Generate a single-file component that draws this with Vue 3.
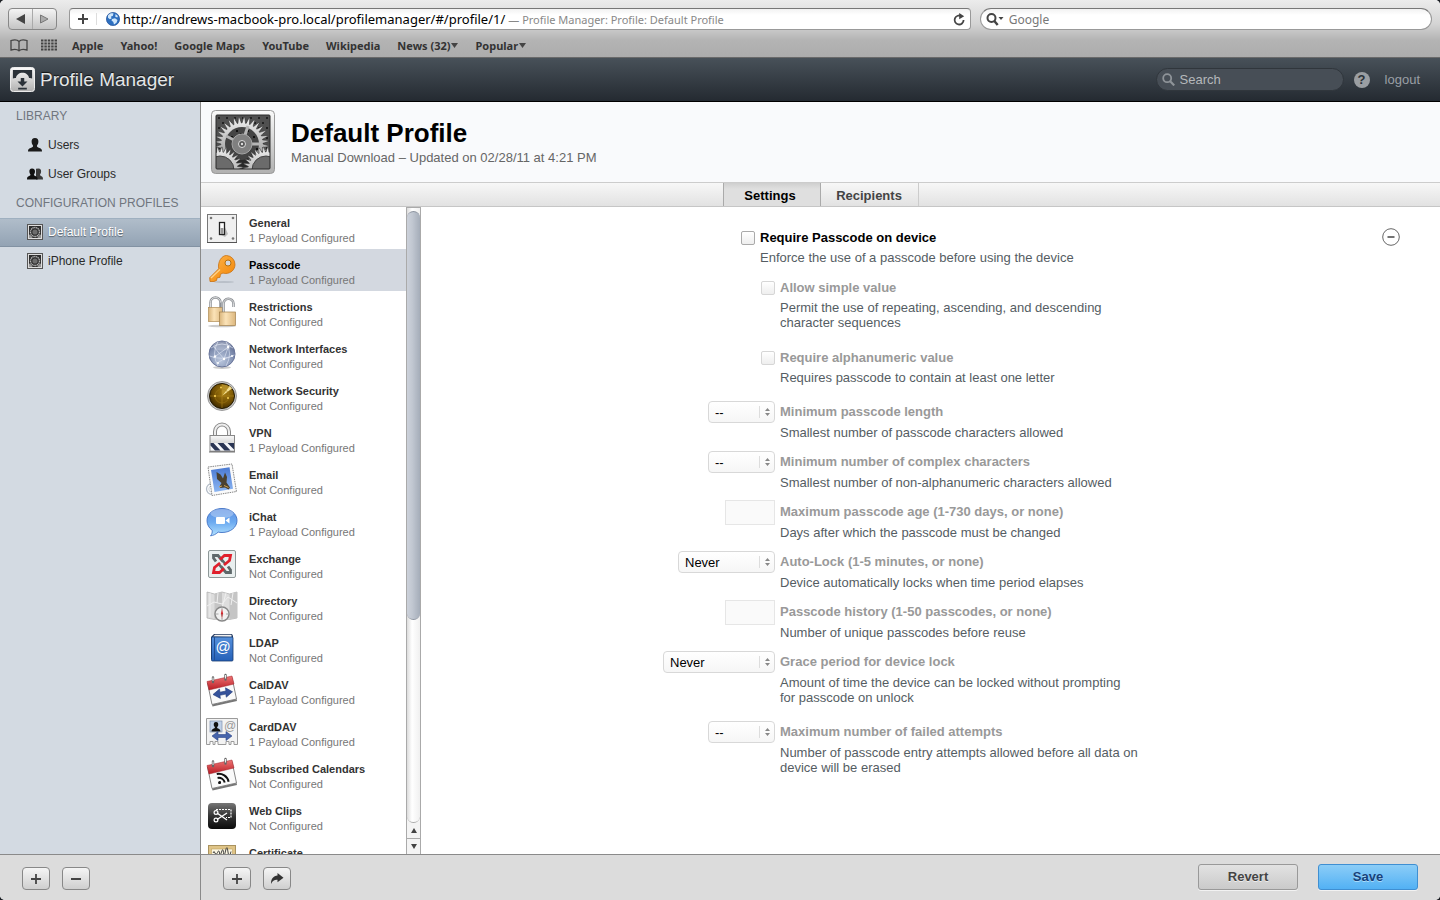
<script setup>
import { ref } from 'vue'

const bookmarks = ['Apple', 'Yahoo!', 'Google Maps', 'YouTube', 'Wikipedia']
const folders = ['News (32)', 'Popular']

const payloads = [
  { icon: 'general', name: 'General', on: true },
  { icon: 'passcode', name: 'Passcode', on: true },
  { icon: 'restrictions', name: 'Restrictions', on: false },
  { icon: 'network', name: 'Network Interfaces', on: false },
  { icon: 'security', name: 'Network Security', on: false },
  { icon: 'vpn', name: 'VPN', on: true },
  { icon: 'email', name: 'Email', on: false },
  { icon: 'ichat', name: 'iChat', on: true },
  { icon: 'exchange', name: 'Exchange', on: false },
  { icon: 'directory', name: 'Directory', on: false },
  { icon: 'ldap', name: 'LDAP', on: false, at: { x: 18, y: 21, size: 15, fill: '#fff' } },
  { icon: 'caldav', name: 'CalDAV', on: true },
  { icon: 'carddav', name: 'CardDAV', on: true, at: { x: 25, y: 15, size: 12, fill: '#999' } },
  { icon: 'calendars', name: 'Subscribed Calendars', on: false },
  { icon: 'webclips', name: 'Web Clips', on: false },
  { icon: 'certificate', name: 'Certificate', on: false }
]

const fields = [
  { id: 'simple', type: 'check', label: 'Allow simple value', help: 'Permit the use of repeating, ascending, and descending character sequences', tall: true },
  { id: 'alpha', type: 'check', label: 'Require alphanumeric value', help: 'Requires passcode to contain at least one letter', last: true },
  { id: 'length', type: 'select', size: 'short', value: '--', label: 'Minimum passcode length', help: 'Smallest number of passcode characters allowed' },
  { id: 'complex', type: 'select', size: 'short', value: '--', label: 'Minimum number of complex characters', help: 'Smallest number of non-alphanumeric characters allowed' },
  { id: 'age', type: 'text', label: 'Maximum passcode age (1-730 days, or none)', help: 'Days after which the passcode must be changed' },
  { id: 'lock', type: 'select', size: 'medium', value: 'Never', label: 'Auto-Lock (1-5 minutes, or none)', help: 'Device automatically locks when time period elapses' },
  { id: 'history', type: 'text', label: 'Passcode history (1-50 passcodes, or none)', help: 'Number of unique passcodes before reuse' },
  { id: 'grace', type: 'select', size: 'long', value: 'Never', label: 'Grace period for device lock', help: 'Amount of time the device can be locked without prompting for passcode on unlock', tall: true },
  { id: 'failed', type: 'select', size: 'short', value: '--', label: 'Maximum number of failed attempts', help: 'Number of passcode entry attempts allowed before all data on device will be erased', tall: true }
]

const selected = ref('passcode')
const tab = ref('settings')
const required = ref(false)

// outline of a cog: pointed teeth between the inner and outer radius
function gear(cx, cy, inner, outer, teeth) {
  const pts = []
  for (let i = 0; i < teeth; i++) {
    const a = (i / teeth) * Math.PI * 2
    const s = (Math.PI * 2) / teeth
    const steps = [[inner, 0], [outer, 0.35], [outer, 0.5], [inner, 0.85]]
    for (const [r, k] of steps) {
      pts.push((cx + r * Math.cos(a + s * k)).toFixed(2) + ' ' + (cy + r * Math.sin(a + s * k)).toFixed(2))
    }
  }
  return 'M' + pts.join('L') + 'Z'
}
</script>

<template>
  <div class="window">
    <!-- BROWSER BAR -->
    <div class="browser">
      <div class="browser-row">
        <div class="nav-buttons">
          <button aria-label="Back"><svg width="9" height="10" viewBox="0 0 9 10"><path d="M9 0v10L0 5z" fill="#444" /></svg></button>
          <button aria-label="Forward"><svg width="9" height="10" viewBox="0 0 9 10"><path d="M.5 1v8L8 5z" fill="#aaa" stroke="#777" /></svg></button>
        </div>
        <div class="address">
          <button class="add-bookmark" aria-label="Add bookmark"><svg width="12" height="12" viewBox="0 0 12 12"><path d="M6 1v10M1 6h10" stroke="#444" stroke-width="2" /></svg></button>
          <svg class="globe" width="14" height="14" viewBox="0 0 14 14">
            <circle cx="7" cy="7" r="6.6" fill="#2d6fc0" stroke="#25539a" stroke-width=".7" />
            <path d="M2 3.5C4 .8 6 1 7.500 1.500L6.800 4 5 4.600 5.500 6.500 3.800 7.200 2 5.800z" fill="#cfe6fa" />
            <path d="M6 7l3-.8 2.500 1.800-1 2.800-2.500 1.700-.7-2.500L5.500 8.600zM9.500 2l2.400 2-.6 1.500-2-.8z" fill="#cfe6fa" />
          </svg>
          <label class="url" for="url">http://andrews-macbook-pro.local/profilemanager/#/profile/1/</label>
          <input id="url" class="page-title" type="text" value="— Profile Manager: Profile: Default Profile">
          <button class="reload" aria-label="Reload"><svg width="12" height="13" viewBox="0 0 12 13"><path d="M8.500 3.200A4.500 4.500 0 1 0 10.600 7" fill="none" stroke="#444" stroke-width="1.800" /><path d="M6.200 0l5 3.300-5 3z" fill="#444" /></svg></button>
        </div>
        <div class="google">
          <svg width="18" height="13" viewBox="0 0 18 13"><circle cx="5.500" cy="5" r="4" fill="none" stroke="#444" stroke-width="2" /><path d="M8.300 8l3.400 4" stroke="#444" stroke-width="2.400" /><path d="M12.500 4h5l-2.500 3z" fill="#444" /></svg>
          <input type="search" aria-label="Google" placeholder="Google">
        </div>
      </div>
      <nav class="bookmarks">
        <a href="#" aria-label="Show all bookmarks"><svg width="18" height="13" viewBox="0 0 18 13"><path d="M9 2.500C7.500.8 4 .6 1 1.500v9.500c3-.8 6.500-.6 8 .9 1.500-1.500 5-1.700 8-.9V1.500C14 .6 10.500.8 9 2.500zm0 0v9" fill="none" stroke="#444" stroke-width="1.300" /></svg></a>
        <a href="#" class="grid-link" aria-label="Top sites"><svg width="16" height="12" viewBox="0 0 16 12"><path d="M0 1.500h16M0 4.500h16M0 7.500h16M0 10.500h16" stroke="#444" stroke-width="2" stroke-dasharray="2.400 1" /></svg></a>
        <a v-for="b in bookmarks" :key="b" href="#">{{ b }}</a>
        <a v-for="f in folders" :key="f" href="#" class="folder">{{ f }}<svg width="7" height="5" viewBox="0 0 7 5"><path d="M0 0h7L3.500 5z" fill="#444" /></svg></a>
      </nav>
    </div>

    <!-- APP HEADER -->
    <header class="header">
      <svg width="25" height="25" viewBox="0 0 26 26">
        <rect x=".5" y=".5" width="25" height="25" rx="3" fill="url(#metal)" stroke="#f2f2f2" />
        <path d="M3 3h20v9c-1.500-.8-2.300-.8-3.200-.5C19.300 8 16.500 6 13 6s-6.300 2-6.800 5.500C5 11.200 4 11.500 3 12z" fill="#2b3239" />
        <path d="M11.200 11.500h3.600V15h3.400L13 20.200 7.800 15h3.400z" fill="#2b3239" />
        <path d="M8.500 22.500h9" stroke="#2b3239" stroke-width="1.800" />
      </svg>
      <h1>Profile Manager</h1>
      <div class="header-search">
        <svg width="13" height="13" viewBox="0 0 13 13"><circle cx="5.200" cy="5.200" r="4" fill="none" stroke="#8f9499" stroke-width="1.800" /><path d="M8.200 8.200l4 4.200" stroke="#8f9499" stroke-width="2.200" /></svg>
        <input type="search" aria-label="Search" placeholder="Search">
      </div>
      <button class="help" aria-label="Help">?</button>
      <a href="#" class="logout">logout</a>
    </header>

    <div class="body">
      <!-- SIDEBAR -->
      <aside class="sidebar">
        <h3>LIBRARY</h3>
        <a href="#">
          <svg width="16" height="14" viewBox="0 0 16 14"><path d="M8 0c2.500 0 3.500 1.700 3.400 3.800C11.300 6 10.400 7 9.900 7.700c0 1.300.6 1.500 2.600 2.200 1.800.7 2.500 1.200 2.500 3.600H1c0-2.400.7-2.900 2.500-3.600 2-.7 2.600-.9 2.600-2.200C5.600 7 4.700 6 4.600 3.800 4.500 1.700 5.500 0 8 0z" fill="#1b1b1b" /></svg>
          Users
        </a>
        <a href="#">
          <svg width="16" height="12" viewBox="0 0 16 12"><path d="M11.500.5c2 0 2.800 1.400 2.600 3.200-.1 1.500-.8 2.300-1.100 2.900 0 1 .3 1.200 1.500 1.700 1.100.5 1.500 1.400 1.500 3.200h-7V.8z" fill="#3a3a3a" /><path d="M5 .5c2.200 0 3.200 1.400 3 3.200-.1 1.500-.8 2.300-1.100 2.900 0 1 .4 1.200 1.900 1.700 1.300.5 1.800 1.400 1.800 3.200H0c0-1.800.4-2.700 1.700-3.200 1.400-.5 1.800-.7 1.800-1.700-.3-.6-1-1.400-1.100-2.900C2.200 1.900 3 .5 5 .5z" fill="#111" /></svg>
          User Groups
        </a>
        <h3>CONFIGURATION PROFILES</h3>
        <a href="#" class="current"><svg width="16" height="16" viewBox="0 0 16 16"><use href="#profile-small" /></svg>Default Profile</a>
        <a href="#"><svg width="16" height="16" viewBox="0 0 16 16"><use href="#profile-small" /></svg>iPhone Profile</a>
      </aside>

      <main class="main">
        <section class="profile">
          <svg width="64" height="64" viewBox="0 0 64 64"><use href="#profile" /></svg>
          <div>
            <h2>Default Profile</h2>
            <p>Manual Download – Updated on 02/28/11 at 4:21 PM</p>
          </div>
        </section>

        <div class="tabs">
          <button :class="{ active: tab === 'settings' }" @click="tab = 'settings'">Settings</button>
          <button :class="{ active: tab === 'recipients' }" @click="tab = 'recipients'">Recipients</button>
        </div>

        <div class="columns">
          <!-- PAYLOADS -->
          <div class="payloads">
            <button v-for="p in payloads" :key="p.icon" :class="{ active: selected === p.icon }" @click="selected = p.icon">
              <svg width="34" height="34" viewBox="0 0 34 34">
                <use :href="'#' + p.icon" />
                <text v-if="p.at" :x="p.at.x" :y="p.at.y" :font-size="p.at.size" :fill="p.at.fill" text-anchor="middle">@</text>
              </svg>
              <span>
                <strong>{{ p.name }}</strong>
                <small>{{ p.on ? '1 Payload Configured' : 'Not Configured' }}</small>
              </span>
            </button>
          </div>
          <div class="scrollbar">
            <div class="track"><div class="thumb"></div></div>
            <button aria-label="Scroll up"><svg width="6" height="5" viewBox="0 0 6 5"><path d="M0 5h6L3 0z" fill="#444" /></svg></button>
            <button aria-label="Scroll down"><svg width="6" height="5" viewBox="0 0 6 5"><path d="M0 0h6L3 5z" fill="#444" /></svg></button>
          </div>

          <!-- SETTINGS -->
          <div class="settings">
            <form class="form" @submit.prevent>
              <div class="row row-check outer">
                <div class="control"><input id="required" v-model="required" type="checkbox"></div>
                <div class="info">
                  <label for="required">Require Passcode on device</label>
                  <p>Enforce the use of a passcode before using the device</p>
                </div>
              </div>
              <div v-for="f in fields" :key="f.id" class="row" :class="['row-' + f.type, { tall: f.tall, last: f.last, disabled: !required }]">
                <div class="control">
                  <input v-if="f.type === 'check'" :id="f.id" type="checkbox" :disabled="!required">
                  <input v-else-if="f.type === 'text'" :id="f.id" type="text" :disabled="!required">
                  <div v-else class="picker" :class="f.size">
                    <select :id="f.id" :disabled="!required"><option>{{ f.value }}</option></select>
                    <svg width="12" height="12" viewBox="0 0 12 12"><path d="M.5 0v12" stroke="#ddd" /><path d="M6 5h5L8.500 2zM6 7h5l-2.500 3z" fill="#888" /></svg>
                  </div>
                </div>
                <div class="info">
                  <label :for="f.id">{{ f.label }}</label>
                  <p>{{ f.help }}</p>
                </div>
              </div>
            </form>
            <button class="remove" aria-label="Remove payload"><svg width="18" height="18" viewBox="0 0 18 18"><circle cx="9" cy="9" r="8.300" fill="#fff" stroke="#666" /><path d="M5.500 9h7" stroke="#444" stroke-width="1.600" /></svg></button>
          </div>
        </div>
      </main>
    </div>

    <!-- BOTTOM BAR -->
    <footer class="footer">
      <div class="footer-side">
        <button class="tool" aria-label="Add profile"><svg width="12" height="12" viewBox="0 0 12 12"><path d="M6 1v10M1 6h10" stroke="#444" stroke-width="1.800" /></svg></button>
        <button class="tool" aria-label="Remove profile"><svg width="12" height="12" viewBox="0 0 12 12"><path d="M1 6h10" stroke="#444" stroke-width="1.800" /></svg></button>
      </div>
      <div class="footer-main">
        <button class="tool" aria-label="Add payload"><svg width="12" height="12" viewBox="0 0 12 12"><path d="M6 1v10M1 6h10" stroke="#444" stroke-width="1.800" /></svg></button>
        <button class="tool" aria-label="Actions"><svg width="14" height="12" viewBox="0 0 14 12"><path d="M7.500 0L13.500 4.800 7.500 9.300V6.800C4.500 6.600 2.500 7.600 1 11 .8 6 3.500 2.800 7.500 2.600z" fill="#333" /></svg></button>
        <button class="action push">Revert</button>
        <button class="action save">Save</button>
      </div>
    </footer>

    <!-- ICONS -->
    <svg class="sprite" width="0" height="0" aria-hidden="true">
      <defs>
        <linearGradient id="metal" x1="0" y1="0" x2="0" y2="1"><stop offset="0" stop-color="#fafafa" /><stop offset="1" stop-color="#b0b0b0" /></linearGradient>
        <linearGradient id="cog" x1="0" y1="0" x2="0" y2="1"><stop offset="0" stop-color="#f2f2f2" /><stop offset="1" stop-color="#7d7d7d" /></linearGradient>
        <linearGradient id="orange" x1="0" y1="0" x2="1" y2="1"><stop offset="0" stop-color="#ffb950" /><stop offset="1" stop-color="#f08000" /></linearGradient>
        <linearGradient id="brass" x1="0" y1="0" x2="1" y2="0"><stop offset="0" stop-color="#d9b57c" /><stop offset=".4" stop-color="#fbe3b8" /><stop offset="1" stop-color="#dcb77e" /></linearGradient>
        <radialGradient id="sphere" cx=".45" cy=".75" r=".8"><stop offset="0" stop-color="#b9c6dd" /><stop offset=".6" stop-color="#8392b3" /><stop offset="1" stop-color="#59658a" /></radialGradient>
        <radialGradient id="radar" cx=".6" cy=".35" r=".75"><stop offset="0" stop-color="#a87f12" /><stop offset=".6" stop-color="#6f4d02" /><stop offset="1" stop-color="#2b1c00" /></radialGradient>
        <linearGradient id="bubble" x1="0" y1="0" x2="0" y2="1"><stop offset="0" stop-color="#5d8fe2" /><stop offset=".5" stop-color="#6caaf0" /><stop offset="1" stop-color="#b2e2ff" /></linearGradient>
        <linearGradient id="sky" x1="0" y1="0" x2="0" y2="1"><stop offset="0" stop-color="#4a79d2" /><stop offset="1" stop-color="#8cb6f2" /></linearGradient>
        <linearGradient id="book" x1="0" y1="0" x2="0" y2="1"><stop offset="0" stop-color="#5590dc" /><stop offset="1" stop-color="#2460b8" /></linearGradient>
        <linearGradient id="red" x1="0" y1="0" x2="0" y2="1"><stop offset="0" stop-color="#ee7474" /><stop offset="1" stop-color="#b81c24" /></linearGradient>
        <linearGradient id="black" x1="0" y1="0" x2="0" y2="1"><stop offset="0" stop-color="#777" /><stop offset=".5" stop-color="#333" /><stop offset="1" stop-color="#0b0b0b" /></linearGradient>
        <clipPath id="plate"><rect x="5" y="5" width="54" height="54" rx="1" /></clipPath>
      </defs>

      <symbol id="profile" viewBox="0 0 64 64">
        <rect x=".5" y=".5" width="63" height="63" rx="4" fill="url(#metal)" stroke="#999" />
        <g clip-path="url(#plate)">
          <rect x="5" y="5" width="54" height="54" fill="#505050" />
          <path d="M7 8h50M11 13h50M7 18h50M11 23h50M7 28h50M11 33h50M7 38h50M11 43h50" stroke="#222" stroke-width="2" stroke-dasharray="2 6" />
          <path :d="gear(31, 34, 21, 27, 32)" fill="url(#cog)" stroke="#333" stroke-width=".6" />
          <circle cx="31" cy="34" r="17" fill="#444" />
          <path d="M20 27h2M25 21h2M29 24h2M36 21h2M42 27h2M45 39h2M40 44h2" stroke="#111" stroke-width="2" />
          <path d="M31 34L15 26M31 34l6-18M31 34h18" stroke="#b5b5b5" stroke-width="3" />
          <circle cx="31" cy="34" r="10" fill="#808080" stroke="#a5a5a5" />
          <circle cx="31" cy="34" r="3.500" fill="#555" stroke="#ddd" />
          <circle cx="31" cy="34" r="1.200" fill="#ddd" />
          <path d="M20 64l5-16q6 4 12 0l7 16z" fill="#292929" />
          <path :d="gear(9, 60, 18, 23, 32)" fill="url(#cog)" stroke="#333" stroke-width=".6" />
          <circle cx="9" cy="60" r="14" fill="#6b6b6b" stroke="#444" />
          <path :d="gear(55, 60, 18, 23, 32)" fill="url(#cog)" stroke="#333" stroke-width=".6" />
          <circle cx="55" cy="60" r="14" fill="#6b6b6b" stroke="#444" />
        </g>
        <rect x="5" y="5" width="54" height="54" rx="1" fill="none" stroke="#2b2b2b" />
      </symbol>

      <symbol id="profile-small" viewBox="0 0 16 16">
        <rect x=".5" y=".5" width="15" height="15" fill="#ddd" stroke="#555" />
        <rect x="2" y="2" width="12" height="12" fill="#2e2e2e" />
        <circle cx="8" cy="8" r="4.500" fill="none" stroke="#b5b5b5" stroke-width="1.300" stroke-dasharray="1.300 .5" />
        <circle cx="8" cy="8" r="2.600" fill="#6d6d6d" />
        <path d="M2 10.500q3 .5 3.500 3.500H2zM14 10.500q-3 .5-3.500 3.500H14z" fill="#969696" />
      </symbol>

      <symbol id="general" viewBox="0 0 34 34">
        <rect x="2.500" y="3.500" width="29" height="28" fill="#f0f0f0" stroke="#777" />
        <path d="M2 31.500h30" stroke="#555" />
        <g fill="#777"><circle cx="6" cy="7" r="1.300" /><circle cx="28" cy="7" r="1.300" /><circle cx="6" cy="27.500" r="1.300" /><circle cx="28" cy="27.500" r="1.300" /></g>
        <path d="M19 14l4 9-3 3-4-2z" fill="#bbb" />
        <rect x="14.500" y="11.500" width="5" height="12" fill="#fff" stroke="#222" stroke-width="1.300" />
        <rect x="15.500" y="17" width="3" height="6" fill="#999" />
      </symbol>

      <symbol id="passcode" viewBox="0 0 34 34">
        <ellipse cx="19" cy="29" rx="10" ry="1" fill="#b9bfc8" />
        <path d="M21.500 2.500a9 9 0 0 1 8.500 9c0 5.200-4.300 9-9.300 9-1.500 0-2-.2-2.700-.5l-2.600 1.300-.4 3-3 .6-.4 2.500L9 28.500H5l-.3-3.800 9-9c-1.200-7 3-13.200 7.800-13.200z" fill="url(#orange)" stroke="#c87010" stroke-width=".8" />
        <path d="M6 25l9-8.500" stroke="#ffd38a" stroke-width="1.300" />
        <circle cx="23" cy="10" r="3" fill="#d3d8df" stroke="#b5700f" />
      </symbol>

      <symbol id="restrictions" viewBox="0 0 34 34">
        <ellipse cx="17" cy="31" rx="14" ry="1.300" fill="#ccc" />
        <path d="M5.500 14V7.500a5 5 0 0 1 10 0V13" fill="none" stroke="#8d9196" stroke-width="2.500" />
        <path d="M5.500 13V7.500a5 5 0 0 1 10 0" fill="none" stroke="#eee" stroke-width=".8" />
        <rect x="3.500" y="12.500" width="14" height="14" fill="url(#brass)" stroke="#b08c55" stroke-width=".7" />
        <path d="M18.500 18V9a5 5 0 0 1 10-.5V12" fill="none" stroke="#8d9196" stroke-width="2.500" />
        <path d="M18.500 17V9a5 5 0 0 1 10-.5V12" fill="none" stroke="#eee" stroke-width=".8" />
        <rect x="14.500" y="17" width="16" height="13.500" fill="url(#brass)" stroke="#a17f4b" stroke-width=".7" />
      </symbol>

      <symbol id="network" viewBox="0 0 34 34">
        <ellipse cx="17" cy="30.500" rx="9" ry="1.500" fill="#ccc" />
        <circle cx="17" cy="17" r="13" fill="url(#sphere)" stroke="#69759a" />
        <path d="M6 11Q17 3 28 11M4.500 19Q17 24 29.500 18M13 4.500Q6 17 13 29M21 4.500Q28 17 21 29M9 10l10 12 5-14M8 21l14-10M12 26l7-4 9-3" fill="none" stroke="#d8e0ef" stroke-width=".7" />
        <g fill="#fff"><circle cx="10" cy="19.500" r="1.200" /><circle cx="19" cy="22" r="1.200" /><circle cx="23" cy="10" r="1.200" /><circle cx="13" cy="26" r="1" /><circle cx="27" cy="19" r="1" /></g>
        <ellipse cx="17" cy="9" rx="9" ry="4.500" fill="#fff" opacity=".28" />
      </symbol>

      <symbol id="security" viewBox="0 0 34 34">
        <circle cx="17" cy="17" r="14.500" fill="#c8c8c8" stroke="#888" stroke-width=".8" />
        <circle cx="17" cy="17" r="12.500" fill="url(#radar)" stroke="#221800" />
        <path d="M17 17L24.500 7A12.500 12.500 0 0 1 27 9.500z" fill="#f4df92" />
        <path d="M17 17V5.500q4.500 0 7.500 2z" fill="#c9a53a" opacity=".6" />
        <path d="M5 17h24M17 5v24" stroke="#b88d22" stroke-width=".5" /><circle cx="17" cy="17" r="7" fill="none" stroke="#a37c1a" stroke-width=".5" />
        <g fill="#ffd95a"><circle cx="10" cy="17" r="1" /><circle cx="16" cy="8.500" r=".9" /><circle cx="23" cy="19" r=".9" /></g>
      </symbol>

      <symbol id="vpn" viewBox="0 0 34 34">
        <path d="M10 16V10.500a7 7 0 0 1 14 0V16" fill="none" stroke="#888" stroke-width="4" />
        <path d="M10 16V10.500a7 7 0 0 1 14 0V16" fill="none" stroke="#eee" stroke-width="2" />
        <rect x="5" y="14.500" width="24.500" height="16" fill="url(#metal)" stroke="#888" />
        <rect x="5.500" y="22" width="23.500" height="7.500" fill="#f4f6fa" />
        <path d="M5.500 22h3l7 7.500H10l-4.500-5zM12.500 22h6l7 7.500h-6zM22.500 22H29v6.500z" fill="#2a3554" />
        <path d="M4 31h26" stroke="#777" />
      </symbol>

      <symbol id="email" viewBox="0 0 34 34">
        <circle cx="7" cy="26" r="5.500" fill="none" stroke="#b2bbc6" stroke-width="1.300" /><circle cx="7" cy="26" r="3.200" fill="none" stroke="#cdd3db" />
        <path d="M3 4L27 1l4.500 27.500L7 32.500z" fill="#fafafa" stroke="#888" stroke-dasharray="1.500 .8" />
        <path d="M6 7l18.500-2.800 3.500 21.500L9.500 29z" fill="url(#sky)" />
        <path d="M11.500 9l4 2.500 2.500 4 2-6 2 4.500-.5 5.500 3.500 5-1.500 2-3.500-2-4.500.5-1-1.500 2-3.500-4.500-4z" fill="#4a4130" />
        <path d="M19 22.500l4.500 2M14 24l3-1" stroke="#d2a552" />
      </symbol>

      <symbol id="ichat" viewBox="0 0 34 34">
        <path d="M17 3.500c8.500 0 15 5.200 15 12s-6.500 12-15 12c-1.500 0-2.600-.1-3.800-.4-2.500 2.300-5 3.400-7.700 3.700 1.500-1.800 1.900-3.200 1.700-5.500C4 23 2 19.600 2 15.500c0-6.800 6.500-12 15-12z" fill="url(#bubble)" stroke="#3f72c5" stroke-width=".9" />
        <ellipse cx="17" cy="8.500" rx="11.500" ry="4.500" fill="#fff" opacity=".3" />
        <rect x="11" y="12" width="9" height="7" rx="1" fill="#fff" /><path d="M20.500 15.500l4-3v6z" fill="#fff" />
      </symbol>

      <symbol id="exchange" viewBox="0 0 34 34">
        <rect x="3.500" y="3.500" width="27" height="27" rx="1.500" fill="#e9efef" stroke="#8e9898" />
        <g fill="none" stroke-width="2.800">
          <path d="M11 14.500L8.500 11V8.500h4.500l7.500 9M23 19.500l2.500 3.500v2.500H21l-7.500-9" stroke="#5e686a" />
          <path d="M15 12.500l4.500-4h6l-1 5-5.500 4.500M19 21.500l-4.500 4h-6l1-5 5.500-4.500" stroke="#e0202c" />
        </g>
        <circle cx="17" cy="17" r="1.400" fill="#e9efef" />
      </symbol>

      <symbol id="directory" viewBox="0 0 34 34">
        <path d="M2 3l7.500 2L17 3l7.500 2L32 3v26l-7.500 1.500L17 29l-7.500 1.500L2 29z" fill="#ddd" stroke="#aaa" stroke-width=".7" />
        <path d="M9.500 5v25L17 29V3zM24.500 5v25L32 29V3z" fill="#c5c5c5" />
        <path d="M5 4v24M2 17l7-4 8 2 6-7 9 6M13 4l-1 10M21 4l-4 15M28 4l-2 12" fill="none" stroke="#f0f0f0" stroke-width="1" />
        <circle cx="17" cy="25" r="7" fill="#f1f1f1" stroke="#888" stroke-width="1.500" />
        <path d="M17 18.500v3M17 29v2M10.500 25h3M21 25h3" stroke="#aaa" /><path d="M15.800 25L17 20l1.200 5z" fill="#d3262c" /><path d="M15.800 25l1.200 5 1.200-5z" fill="#b95a5a" />
      </symbol>

      <symbol id="ldap" viewBox="0 0 34 34">
        <path d="M6 6l3-3h18l1 2v23H6z" fill="#22385f" />
        <path d="M8 5.500L10 3.700h16.500V6z" fill="#f1f1f1" />
        <rect x="6.500" y="6" width="21.500" height="24" rx="1" fill="url(#book)" stroke="#173b70" stroke-width=".8" />
        <path d="M9.500 6v24" stroke="#204f94" />
      </symbol>

      <symbol id="calendar" viewBox="0 0 34 34">
        <path d="M7 31.500L31.500 26l.5 2-24.500 5.500z" fill="#777" />
        <path d="M2.500 10L27 4.500 31.500 26 7 31.500z" fill="#fafafa" stroke="#777" stroke-width=".9" />
        <path d="M2 8.500L27 3l2 8L4 17z" fill="url(#red)" stroke="#a12028" stroke-width=".5" />
        <path d="M8 9V4.500M20.500 6.500V2" stroke="#666" stroke-width="2.400" stroke-linecap="round" /><path d="M8 8V4.500M20.500 5.500V2" stroke="#eee" stroke-width="1" />
      </symbol>
      <symbol id="caldav" viewBox="0 0 34 34">
        <use href="#calendar" />
        <path d="M8 21.500l6.500-5.500.4 3.200 6-1.200-.4-3.200 7 4-6.200 5.400-.5-3.100-5.900 1.200.5 3.100z" fill="#35529b" stroke="#1f3979" stroke-width=".6" />
      </symbol>
      <symbol id="calendars" viewBox="0 0 34 34">
        <use href="#calendar" />
        <g transform="rotate(-12 15 25)" fill="none" stroke="#111" stroke-width="2"><path d="M13.500 20.500a6 6 0 0 1 6 6M13.500 16.500a10 10 0 0 1 10 10" /><circle cx="14.500" cy="25.500" r="1" fill="#111" stroke-width="1" /></g>
      </symbol>

      <symbol id="carddav" viewBox="0 0 34 34">
        <path d="M1.500 3.500h31v26H29v-3h-3v3h-2v-3h-3v3h-8v-3h-3v3H8v-3H5v3H1.500z" fill="#f3f3f3" stroke="#9b9b9b" />
        <rect x="5" y="6" width="12" height="11" fill="#bfd0e8" stroke="#8192ae" stroke-width=".7" />
        <path d="M11 7c2 0 2.500 1.500 2.200 3.500L12 12.500c0 1 3.500 1 3.500 4h-9c0-3 3.500-3 3.500-4l-1.200-2C8.500 8.500 9 7 11 7z" fill="#111" />
        <path d="M7 21l6-4.500v3h8v-3l6 4.500-6 4.500v-3h-8v3z" fill="#4664ab" stroke="#2d4788" stroke-width=".6" />
      </symbol>

      <symbol id="webclips" viewBox="0 0 34 34">
        <rect x="3" y="4" width="28" height="26" rx="4" fill="url(#black)" />
        <path d="M11 10.500h15v8h-5" fill="none" stroke="#fff" stroke-width="1.200" stroke-dasharray="2 1" />
        <path d="M12 20.500L22 14M12 14l10 7" stroke="#fff" stroke-width="1.400" />
        <circle cx="11" cy="13.500" r="1.900" fill="none" stroke="#fff" stroke-width="1.200" /><circle cx="11" cy="21" r="1.900" fill="none" stroke="#fff" stroke-width="1.200" />
      </symbol>

      <symbol id="certificate" viewBox="0 0 34 34">
        <rect x="3.500" y="4.500" width="27" height="22" fill="#dfc487" stroke="#a9925e" />
        <rect x="6.500" y="8" width="21" height="16" fill="#fbf6e2" stroke="#c1a462" stroke-width=".6" />
        <path d="M8 12q1-3 2 0t2.500-.5 2 .5 2-1 2 .6 2-1.600 2.500 1 3-.5" fill="none" stroke="#444" />
      </symbol>
    </svg>
  </div>
</template>

<style>
body {
  background: #1c1f24;
}
</style>

<style scoped>
* {
  box-sizing: border-box;
}

.window {
  display: flex;
  flex-direction: column;
  height: 100vh;
  overflow: hidden;
  border-radius: 5px;
  font-family: "Liberation Sans", Arial, sans-serif;
  font-size: 13px;
  color: #333;
  background: #fff;
}

h1, h2, h3, p {
  margin: 0;
  font-weight: normal;
}

a {
  color: inherit;
  text-decoration: none;
}

button, input, select {
  margin: 0;
  padding: 0;
  border: 0;
  background: none;
  font: inherit;
  color: inherit;
  outline: 0;
}

svg {
  display: block;
  flex: none;
}

/* browser */
.browser {
  flex: none;
  height: 58px;
  padding: 8px 8px 0;
  border-bottom: 1px solid #6a6a6a;
  background: linear-gradient(#ececec, #d4d4d4 24px, #b4b4b4 40px, #acacac);
  font-family: "Noto Sans", sans-serif;
}

.browser-row {
  display: flex;
  height: 22px;
}

.nav-buttons {
  display: flex;
  width: 49px;
  margin-right: 12px;
  border: 1px solid #888;
  border-radius: 4px;
  background: linear-gradient(#f4f4f4, #c4c4c4);
}

.nav-buttons button {
  flex: 1;
  display: flex;
  align-items: center;
  justify-content: center;
}

.nav-buttons button + button {
  border-left: 1px solid #aaa;
}

.address {
  flex: 904;
  display: flex;
  align-items: center;
  min-width: 0;
  margin-right: 9px;
  padding-right: 5px;
  border: 1px solid #999;
  border-top-color: #777;
  border-radius: 4px;
  background: linear-gradient(#f2f2f2, #fff 6px);
}

.add-bookmark {
  display: flex;
  justify-content: center;
  width: 27px;
  margin-right: 9px;
  border-right: 1px solid #ddd;
}

.globe {
  margin-right: 3px;
}

.url {
  color: #000;
  font-size: 13px;
  white-space: nowrap;
}

.page-title {
  flex: 1;
  min-width: 0;
  padding: 1px 0 0 3px;
  font-size: 11px;
  color: #888;
}

.google {
  flex: 450;
  display: flex;
  align-items: center;
  gap: 5px;
  padding-left: 5px;
  border: 1px solid #999;
  border-top-color: #777;
  border-radius: 11px;
  background: linear-gradient(#f2f2f2, #fff 6px);
}

.google input {
  flex: 1;
  font-size: 12px;
}

.google input::placeholder {
  color: #777;
  opacity: 1;
}

.bookmarks {
  display: flex;
  align-items: center;
  gap: 17px;
  height: 26px;
  padding: 4px 2px 0;
  font-size: 11px;
  font-weight: bold;
  color: #333;
}

.bookmarks .grid-link {
  margin: 0 -2px 0 -4px;
}

.folder {
  display: flex;
  align-items: center;
  gap: 1px;
}

/* header */
.header {
  flex: none;
  display: flex;
  align-items: center;
  height: 44px;
  padding: 0 20px 0 10px;
  border-bottom: 1px solid #000;
  background: linear-gradient(#485159, #242a31);
}

.header h1 {
  flex: 1;
  margin-left: 5px;
  font-size: 19px;
  color: #e4e6e8;
  text-shadow: 0 -1px 1px #111;
}

.header-search {
  display: flex;
  align-items: center;
  gap: 5px;
  width: 188px;
  height: 23px;
  margin-right: 10px;
  padding-left: 5px;
  border: 1px solid #30363c;
  border-radius: 12px;
  background: #474e56;
}

.header-search input {
  width: 150px;
}

.header-search input::placeholder {
  color: #b5b8bb;
  opacity: 1;
}

.help {
  width: 16px;
  height: 16px;
  margin-right: 15px;
  border-radius: 50%;
  background: #9a9ea2;
  font-size: 13px;
  font-weight: bold;
  line-height: 16px;
  color: #2b3138;
}

.logout {
  color: #9a9fa5;
}

/* body */
.body {
  flex: 1;
  display: flex;
  min-height: 0;
}

.sidebar {
  flex: none;
  width: 201px;
  border-right: 1px solid #8a8a8a;
  background: #d3dae2;
  font-size: 12px;
}

.sidebar h3 {
  height: 29px;
  padding-left: 16px;
  font-size: 12px;
  line-height: 28px;
  color: #70767e;
}

.sidebar a {
  display: flex;
  align-items: center;
  gap: 5px;
  height: 29px;
  padding: 0 0 2px 27px;
  color: #2a2a2a;
}

.sidebar .current {
  border-top: 1px solid #9fb0c0;
  border-bottom: 1px solid #8292a3;
  background: linear-gradient(#b0bdca, #93a3b4);
  color: #fff;
  text-shadow: 0 1px 1px #55606c;
}

.main {
  flex: 1;
  display: flex;
  flex-direction: column;
  min-width: 0;
}

.profile {
  flex: none;
  display: flex;
  gap: 16px;
  height: 80px;
  padding: 8px 10px;
  background: #f9fafc;
}

.profile h2 {
  margin-top: 8px;
  font-size: 26px;
  font-weight: bold;
  line-height: 30px;
  color: #000;
}

.profile p {
  line-height: 20px;
  color: #666;
}

.tabs {
  flex: none;
  display: flex;
  justify-content: center;
  height: 25px;
  border-top: 1px solid #ccc;
  border-bottom: 1px solid #c6c6c6;
  background: linear-gradient(#f7f7f7, #e2e2e2);
}

.tabs button {
  width: 98px;
  padding-top: 2px;
  border-right: 1px solid #ccc;
  font-weight: bold;
  color: #444;
}

.tabs .active {
  padding-right: 3px;
  border-left: 1px solid #aaa;
  border-right-color: #aaa;
  background: linear-gradient(#cfcfcf, #dfdfdf 6px);
  color: #000;
}

.columns {
  flex: 1;
  display: flex;
  min-height: 0;
}

.payloads {
  flex: none;
  width: 205px;
  overflow: hidden;
  font-size: 11px;
}

.payloads button {
  display: flex;
  align-items: flex-start;
  gap: 10px;
  width: 100%;
  height: 42px;
  padding: 4px 0 0 4px;
  text-align: left;
}

.payloads span {
  padding-top: 5px;
}

.payloads strong, .payloads small {
  display: block;
  font-size: 11px;
  line-height: 15px;
  white-space: nowrap;
}

.payloads small {
  color: #777;
}

.payloads .active {
  background: #d3d8e0;
}

.payloads .active strong {
  color: #000;
}

.scrollbar {
  flex: none;
  display: flex;
  flex-direction: column;
  width: 15px;
  border: 1px solid #aaa;
  border-width: 1px 1px 0;
  background: #f4f4f4;
}

.track {
  flex: 1;
  padding-top: 3px;
  border-bottom: 1px solid #aaa;
  border-radius: 0 0 7px 7px;
  background: linear-gradient(90deg, #dcdcdc, #fff 5px, #f0f0f0);
}

.thumb {
  height: 67%;
  border: 1px solid #8c939e;
  border-width: 1px 0;
  border-radius: 7px;
  background: linear-gradient(90deg, #ccd1da, #c2c8d2 5px, #a5adb9);
}

.scrollbar button {
  display: flex;
  align-items: center;
  justify-content: center;
  height: 15px;
}

.scrollbar button + button {
  height: 16px;
  border-top: 1px solid #aaa;
}

/* settings */
.settings {
  flex: 1;
  display: grid;
  grid-template-columns: 1fr 541px 1fr;
  align-content: start;
  padding: 21px 0;
}

.form {
  grid-column: 2;
}

.row {
  display: flex;
  gap: 5px;
  margin-bottom: 12px;
}

.row.tall {
  margin-bottom: 17px;
}

.row-check {
  margin-bottom: 13px;
}

.row-check.tall {
  margin-bottom: 18px;
}

.row-check.last {
  margin-bottom: 17px;
}

.control {
  flex: none;
  display: flex;
  justify-content: flex-end;
  align-items: flex-start;
  width: 115px;
  height: 20px;
}

.outer .control {
  width: 95px;
}

.info {
  width: 359px;
}

.info label {
  display: block;
  font-weight: bold;
  line-height: 20px;
  color: #000;
}

.disabled .info label {
  color: #999;
}

.info p {
  padding-top: 3px;
  line-height: 15px;
  color: #555d63;
}

.row-check .info p {
  padding-top: 2px;
}

.control input[type="checkbox"] {
  appearance: none;
  width: 14px;
  height: 14px;
  margin-top: 3px;
  border: 1px solid #aaa;
  border-radius: 2px;
  background: linear-gradient(#fff, #eee);
}

.control input[type="checkbox"]:checked {
  background: #8fb8e8;
}

.control input[type="checkbox"]:disabled {
  border-color: #d6d6d6;
}

.control input[type="text"] {
  width: 50px;
  height: 25px;
  margin-top: -2px;
  border: 1px solid #e6e6e6;
  background: #fafafa;
}

.picker {
  position: relative;
  height: 22px;
  margin-top: -1px;
}

.picker select {
  appearance: none;
  width: 100%;
  height: 22px;
  padding-left: 6px;
  border: 1px solid #d8d8d8;
  border-radius: 4px;
  background: linear-gradient(#fff, #f6f6f6);
  color: #000;
  opacity: 1;
}

.picker svg {
  position: absolute;
  top: 5px;
  right: 4px;
  pointer-events: none;
}

.short {
  width: 67px;
}

.medium {
  width: 97px;
}

.long {
  width: 112px;
}

.remove {
  grid-column: 3;
  justify-self: end;
  align-self: start;
  margin-right: 40px;
}

/* footer */
.footer {
  flex: none;
  display: flex;
  height: 46px;
  border-top: 1px solid #8a8a8a;
  background: #dcdcdc;
}

.footer-side, .footer-main {
  display: flex;
  align-items: center;
  gap: 12px;
  padding: 2px 22px 0;
}

.footer-side {
  width: 201px;
  border-right: 1px solid #8a8a8a;
}

.footer-main {
  flex: 1;
}

.tool {
  display: flex;
  align-items: center;
  justify-content: center;
  width: 28px;
  height: 23px;
  border: 1px solid #888;
  border-radius: 4px;
  background: linear-gradient(#f5f5f5, #cfcfcf);
}

.action {
  width: 100px;
  height: 26px;
  margin-bottom: 4px;
  border: 1px solid #999;
  border-radius: 3px;
  background: linear-gradient(#e2e2e2, #cacaca);
  box-shadow: 0 1px 0 #f2f2f2;
  font-weight: bold;
  color: #444;
  text-shadow: 0 1px 0 #eee;
}

.push {
  margin-left: auto;
}

.save {
  margin-left: 8px;
  border-color: #3f8fd2;
  background: linear-gradient(#8ccdf7, #52b1f4);
  color: #17417a;
  text-shadow: 0 1px 0 #a8dafa;
}

.sprite {
  position: absolute;
}
</style>
